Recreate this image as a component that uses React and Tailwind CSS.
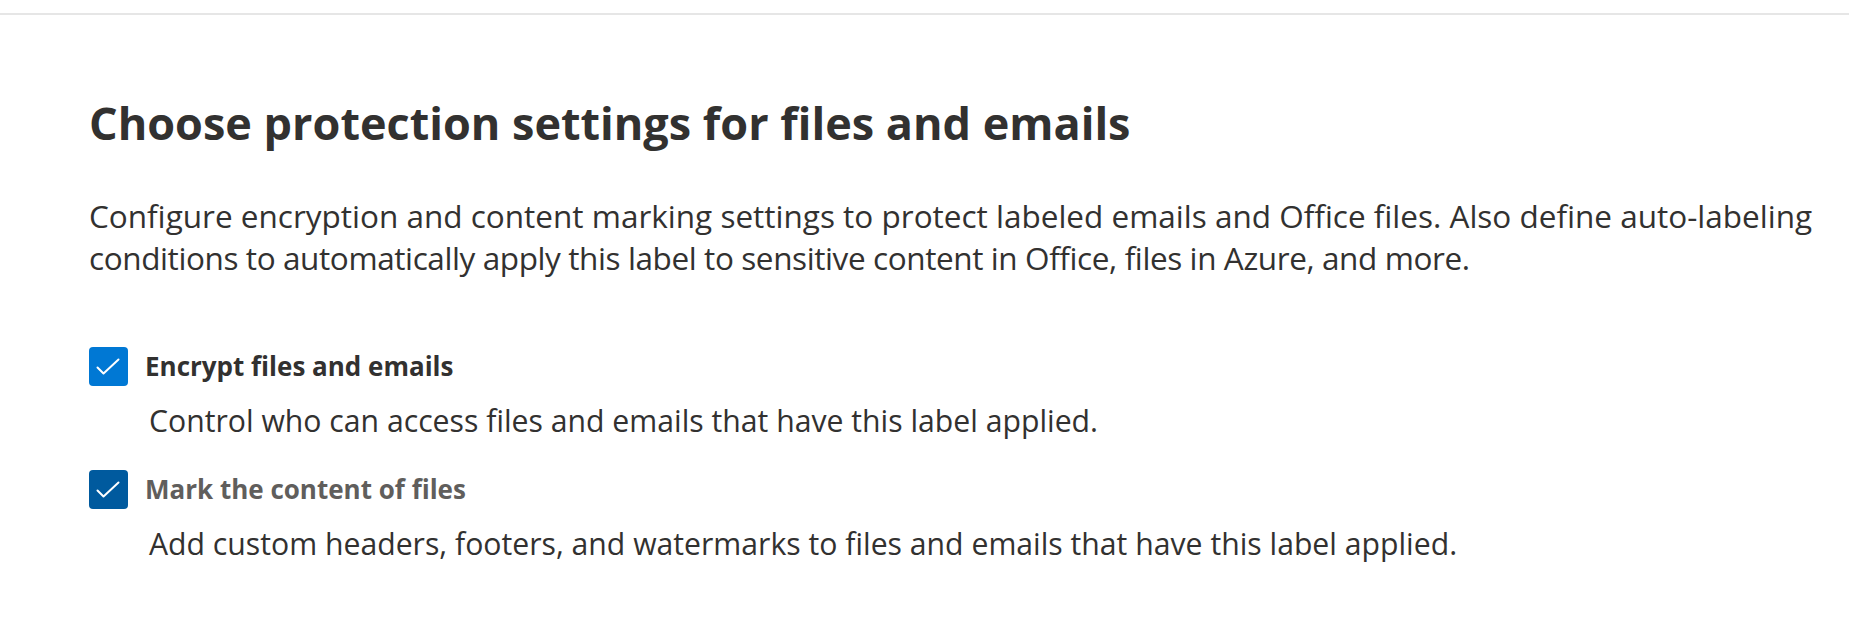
import React from 'react';

const CheckBox = ({ color }) => (
  <span className={`flex h-[39px] w-[39px] shrink-0 items-center justify-center rounded-[4px] ${color}`}>
    <svg width="39" height="39" viewBox="0 0 39 39" fill="none">
      <path d="M8.5 20.5 L14.5 26.5 L29.5 12.5" stroke="white" strokeWidth="2" strokeLinecap="round" strokeLinejoin="round" />
    </svg>
  </span>
);

const Option = ({ label, description, boxColor, labelColor, className }) => (
  <div className={className}>
    <label className="flex items-center gap-[17px]">
      <CheckBox color={boxColor} />
      <span className={`text-[26px] font-bold leading-[40px] ${labelColor}`}>{label}</span>
    </label>
    <p className="mt-[14px] pl-[60px] text-[30.2px] leading-[42px] text-[#323130]">{description}</p>
  </div>
);

export default function App() {
  return (
    <div className="min-h-screen bg-white font-['Open_Sans',sans-serif] text-[#323130]">
      <div className="h-[13px]" />
      <div className="h-[2px] bg-[#e6e6e6]" />
      <div className="pl-[89px]">
        <h1 className="mt-[82px] text-[45px] font-bold leading-[52px]">
          Choose protection settings for files and emails
        </h1>
        <p className="mt-[46px] text-[31.5px] leading-[42px]">
          Configure encryption and content marking settings to protect labeled emails and Office files. Also define auto-labeling
          <br />
          <span className="tracking-[-0.4px]">
            conditions to automatically apply this label to sensitive content in Office, files in Azure, and more.
          </span>
        </p>
        <Option
          className="mt-[67px]"
          label="Encrypt files and emails"
          description="Control who can access files and emails that have this label applied."
          boxColor="bg-[#0078d4]"
          labelColor="text-[#323130]"
        />
        <Option
          className="mt-[27px]"
          label="Mark the content of files"
          description="Add custom headers, footers, and watermarks to files and emails that have this label applied."
          boxColor="bg-[#005a9e]"
          labelColor="text-[#605e5c]"
        />
      </div>
    </div>
  );
}
